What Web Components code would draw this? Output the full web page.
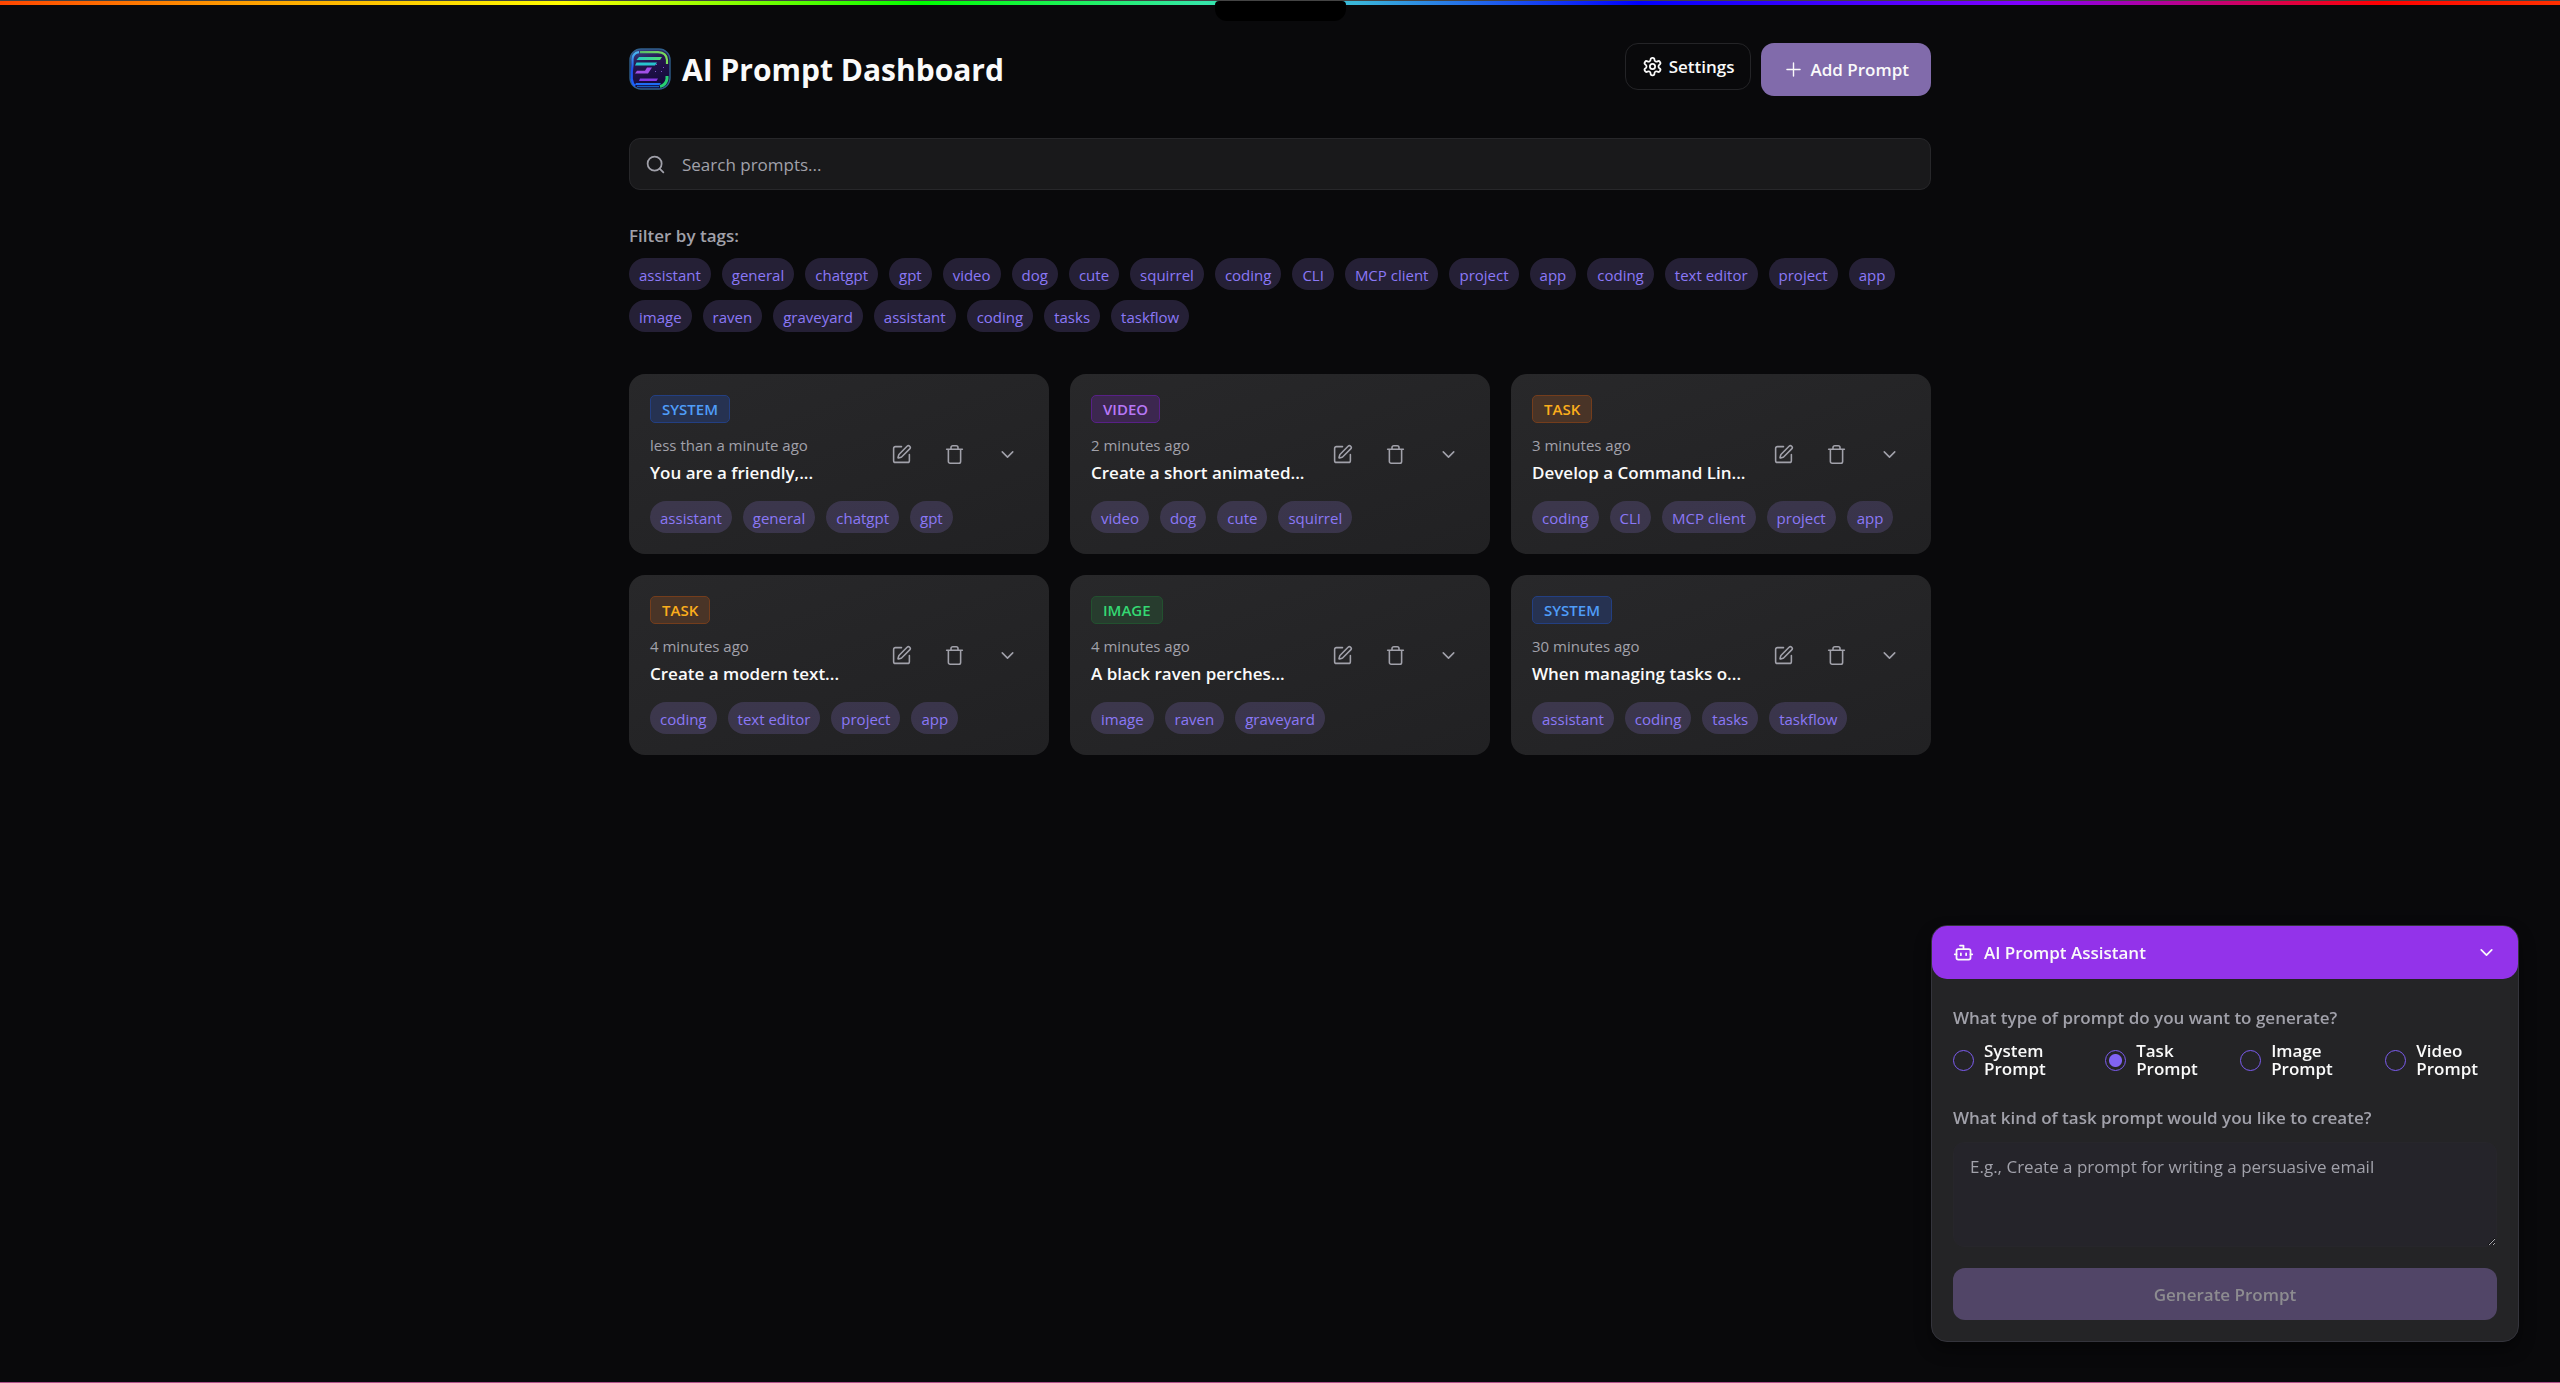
<!DOCTYPE html>
<html lang="en">
<head>
<meta charset="utf-8">
<title>AI Prompt Dashboard</title>
<style>
  html { height: 100%; }
  body {
    margin: 0;
    min-height: 100%;
    background: #09090b;
    color: #fafafa;
    font: 400 17px/26px "Open Sans", "Noto Sans", sans-serif;
  }
</style>
</head>
<body>
<prompt-dashboard></prompt-dashboard>
<script>
const ICONS = {
  settings: '<path d="M12.22 2h-.44a2 2 0 0 0-2 2v.18a2 2 0 0 1-1 1.73l-.43.25a2 2 0 0 1-2 0l-.15-.08a2 2 0 0 0-2.73.73l-.22.38a2 2 0 0 0 .73 2.73l.15.1a2 2 0 0 1 1 1.72v.51a2 2 0 0 1-1 1.74l-.15.09a2 2 0 0 0-.73 2.73l.22.38a2 2 0 0 0 2.73.73l.15-.08a2 2 0 0 1 2 0l.43.25a2 2 0 0 1 1 1.73V20a2 2 0 0 0 2 2h.44a2 2 0 0 0 2-2v-.18a2 2 0 0 1 1-1.73l.43-.25a2 2 0 0 1 2 0l.15.08a2 2 0 0 0 2.73-.73l.22-.39a2 2 0 0 0-.73-2.73l-.15-.08a2 2 0 0 1-1-1.74v-.5a2 2 0 0 1 1-1.74l.15-.09a2 2 0 0 0 .73-2.73l-.22-.38a2 2 0 0 0-2.73-.73l-.15.08a2 2 0 0 1-2 0l-.43-.25a2 2 0 0 1-1-1.73V4a2 2 0 0 0-2-2z"/><circle cx="12" cy="12" r="3"/>',
  plus: '<path d="M4.500 12h15M12 4.500v15"/>',
  search: '<circle cx="11" cy="11" r="8"/><path d="m21 21-4.3-4.3"/>',
  edit: '<path d="M12 3H5a2 2 0 0 0-2 2v14a2 2 0 0 0 2 2h14a2 2 0 0 0 2-2v-7"/><path d="M18.375 2.625a1 1 0 0 1 3 3l-9.013 9.014a2 2 0 0 1-.853.505l-2.873.84a.5.5 0 0 1-.62-.62l.84-2.873a2 2 0 0 1 .506-.852z"/>',
  trash: '<path d="M3 6h18M19 6v14a2 2 0 0 1-2 2H7a2 2 0 0 1-2-2V6M8 6V4a2 2 0 0 1 2-2h4a2 2 0 0 1 2 2v2"/>',
  chevron: '<path d="m6 9 6 6 6-6"/>',
  bot: '<path d="M12 8V4H8"/><rect width="16" height="12" x="4" y="8" rx="2"/><path d="M2 14h2M20 14h2M15 13v2M9 13v2"/>'
};

class UiIcon extends HTMLElement {
  constructor() {
    super();
    this.attachShadow({ mode: 'open' });
  }
  connectedCallback() {
    const weight = this.getAttribute('weight') || '2';
    this.shadowRoot.innerHTML = `
      <style>
        :host { display: inline-flex; flex: none; width: 21px; height: 21px; }
        svg { width: 100%; height: 100%; }
      </style>
      <svg viewBox="0 0 24 24" fill="none" stroke="currentColor" stroke-width="${weight}"
        stroke-linecap="round" stroke-linejoin="round" aria-hidden="true">${ICONS[this.getAttribute('name')]}</svg>`;
  }
}
customElements.define('ui-icon', UiIcon);

const define = (name, html, setup) => {
  const template = document.createElement('template');
  template.innerHTML = html;
  customElements.define(name, class extends HTMLElement {
    constructor() {
      super();
      this.attachShadow({ mode: 'open' }).append(template.content.cloneNode(true));
    }
    connectedCallback() { if (setup) setup.call(this, this.shadowRoot); }
  });
};

define('app-logo', `
  <style>
    :host { display: block; width: 42px; height: 42px; flex: none; }
    svg { display: block; width: 100%; height: 100%; }
  </style>
  <svg viewBox="0 0 42 42" aria-hidden="true">
    <defs>
      <linearGradient id="bg" x1="0" y1="0" x2=".3" y2="1"><stop offset="0" stop-color="#3b4a8f"/><stop offset=".4" stop-color="#26154f"/><stop offset="1" stop-color="#130a3a"/></linearGradient>
      <linearGradient id="left" x1="0" y1="0" x2="0" y2="1"><stop offset="0" stop-color="#49b8f0"/><stop offset=".5" stop-color="#1d4dea"/><stop offset="1" stop-color="#1c62ff"/></linearGradient>
      <linearGradient id="right" x1="0" y1="0" x2="1" y2="0"><stop offset="0" stop-color="#56b86a"/><stop offset="1" stop-color="#7be05a"/></linearGradient>
      <linearGradient id="teal" x1="0" y1="0" x2="1" y2="0"><stop offset="0" stop-color="#27c6c8"/><stop offset="1" stop-color="#4fdf6e"/></linearGradient>
    </defs>
    <rect x="1" y="1" width="40" height="40" rx="11" fill="url(#bg)" stroke="#2f5f8c" stroke-width="1.4"/>
    <g fill="none" stroke-width="2.2">
      <path d="M10 4.200Q4 5 3.500 11V17L2.800 24V31Q3.500 36 6 38" stroke="url(#left)"/>
      <path d="M11 4.200H29Q37.500 4.500 38 12V16" stroke="url(#right)"/>
      <path d="M38 28V31Q37 37 31 38.500" stroke="#27cf72" stroke-width="3"/>
      <path d="M8 38.500H30" stroke="#185fc0" stroke-width="1.4"/>
    </g>
    <path d="M10 9H33L31 12H7.500Z" fill="url(#teal)"/>
    <path d="M7.500 14.500H28L26 17.500H6Z" fill="#27c4cf"/>
    <path d="M18 19.500H23L19 25.500H6L8 22.800H16Z" fill="#a04fe6"/>
    <path d="M11 30.500H29L27.500 33H10Z" fill="#8438e4"/>
    <path d="M7 35H32L30.500 37H6Z" fill="#1f6cf5"/>
    <path d="M27 16h1v1h-1zM32 23h1v1h-1zM26 23h1v1h-1zM34 19h1v1h-1z" fill="#7a58c8"/>
  </svg>`);

define('prompt-tag', `
  <style>
    :host { display: inline-flex; }
    button {
      border: 0; border-radius: 16px; padding: 2px 10px 0; height: 32px;
      background: rgba(167, 139, 250, .18); color: #8b78f6;
      font: inherit; font-size: 15px; line-height: 30px; white-space: nowrap;
    }
  </style>
  <button type="button"><slot></slot></button>`);

define('prompt-card', `
  <style>
    :host {
      display: block; padding: 21px; border-radius: 16px;
      background: linear-gradient(160deg, #28282a, #212123);
    }
    .top { display: flex; align-items: flex-end; gap: 10px; }
    .text { flex: 1; min-width: 0; }
    .badge {
      display: inline-block; box-sizing: border-box; height: 28px; padding: 0 11px;
      border: 1px solid var(--line); border-radius: 5px;
      background: var(--fill); color: var(--ink);
      font-size: 15px; font-weight: 600; line-height: 27px; vertical-align: top;
    }
    .when { margin-top: 9px; color: #a1a1aa; font-size: 15px; line-height: 26px; }
    h3 { margin: 0; font-size: 17px; font-weight: 600; line-height: 30px; white-space: nowrap; }
    .actions { display: flex; gap: 11px; padding-bottom: 13px; }
    .actions button {
      display: grid; place-items: center; width: 42px; height: 42px; padding: 0;
      border: 0; background: none; color: #a1a1aa;
    }
    .tags { display: flex; flex-wrap: wrap; gap: 11px; margin-top: 13px; }
  </style>
  <div class="top">
    <div class="text">
      <span class="badge"></span>
      <div class="when"></div>
      <h3><slot></slot></h3>
    </div>
    <div class="actions">
      <button type="button" aria-label="Edit"><ui-icon name="edit" weight="1.8"></ui-icon></button>
      <button type="button" aria-label="Delete"><ui-icon name="trash" weight="1.8"></ui-icon></button>
      <button type="button" aria-label="Expand"><ui-icon name="chevron" weight="1.8"></ui-icon></button>
    </div>
  </div>
  <div class="tags"></div>`, function (root) {
  const colors = {
    SYSTEM: ['#263251', '#233f82', '#4f9df8'],
    VIDEO: ['#3c274f', '#582087', '#b777f7'],
    TASK: ['#493427', '#743d1c', '#fbad1c'],
    IMAGE: ['#273c2e', '#22512f', '#34d872']
  };
  const kind = this.getAttribute('kind');
  const badge = root.querySelector('.badge');
  badge.textContent = kind;
  ['--fill', '--line', '--ink'].forEach((key, i) => badge.style.setProperty(key, colors[kind][i]));
  root.querySelector('.when').textContent = this.getAttribute('when');
  root.querySelector('.tags').innerHTML = this.getAttribute('tags').split(',').map(t => `<prompt-tag>${t}</prompt-tag>`).join('');
});

define('prompt-assistant', `
  <style>
    :host {
      display: block; position: fixed; right: 41px; bottom: 41px; box-sizing: border-box; width: 588px;
      border: 1px solid #34343c; border-radius: 16px; background: #242426;
      box-shadow: 0 8px 16px rgba(0, 0, 0, .4);
      font-weight: 600;
    }
    header {
      display: flex; align-items: center; gap: 10px; height: 53px; padding: 0 21px;
      border-radius: 15px; background: #9333ea;
    }
    h2 { flex: 1; margin: 0; font-size: 17px; font-weight: 600; }
    header button { display: grid; padding: 0; border: 0; background: none; color: inherit; }
    form { padding: 22px 21px 21px; }
    fieldset { margin: 0; padding: 0; border: 0; min-width: 0; }
    legend, .ask { display: block; padding: 0; color: #a1a1aa; line-height: 34px; }
    .options { display: flex; gap: 30px; margin-top: 7px; }
    .options label { display: flex; align-items: center; gap: 10px; line-height: 18px; }
    input {
      appearance: none; flex: none; box-sizing: border-box; width: 21px; height: 21px; margin: 0;
      border: 1px solid #7c5cf0; border-radius: 50%;
    }
    input:checked { background: radial-gradient(circle, #8163f3 0 6px, transparent 7px); }
    .ask { margin-top: 23px; }
    textarea {
      display: block; box-sizing: border-box; width: 100%; height: 105px; margin-top: 7px; padding: 11px 16px;
      border: 1px solid #27262b; border-radius: 11px; background: #25242a; color: #fafafa;
      font: inherit; font-weight: 400; resize: vertical;
    }
    textarea::placeholder { color: #a1a1aa; }
    .go {
      display: block; width: 100%; height: 52px; margin-top: 21px; padding: 1px 0 0; border: 0; border-radius: 12px;
      background: #514567; color: #8d8c90; font: inherit;
    }
  </style>
  <header>
    <ui-icon name="bot"></ui-icon>
    <h2>AI Prompt Assistant</h2>
    <button type="button" aria-label="Collapse"><ui-icon name="chevron"></ui-icon></button>
  </header>
  <form>
    <fieldset>
      <legend>What type of prompt do you want to generate?</legend>
      <div class="options">
        <label><input type="radio" name="kind"><span>System Prompt</span></label>
        <label><input type="radio" name="kind" checked><span>Task Prompt</span></label>
        <label><input type="radio" name="kind"><span>Image Prompt</span></label>
        <label><input type="radio" name="kind"><span>Video Prompt</span></label>
      </div>
    </fieldset>
    <label class="ask" for="idea">What kind of task prompt would you like to create?</label>
    <textarea id="idea" placeholder="E.g., Create a prompt for writing a persuasive email"></textarea>
    <button class="go" type="button" disabled>Generate Prompt</button>
  </form>`);

define('prompt-dashboard', `
  <style>
    :host {
      display: block; box-sizing: border-box; min-height: 100vh; position: relative;
      border-top: 1px solid #444; border-bottom: 1px solid #b0508a;
    }
    .rainbow {
      height: 4px;
      background: linear-gradient(90deg, #ff4500, #ff9a00 9%, #ffff00 22%, #00ff00 36%, #35e6a8 47%, #3ab5da 53%, #0000ff 64%, #8000ff 79%, #ff0000 93%, #ff3000);
    }
    .notch {
      position: absolute; top: 0; left: 50%; width: 131px; height: 20px; margin-left: -65px;
      border-radius: 4px 4px 12px 12px; background: #000;
    }
    main { width: calc(100% - 64px); max-width: 1302px; margin: 0 auto; padding-top: 38px; }
    header { display: flex; align-items: flex-start; gap: 10px; height: 53px; }
    .brand { display: flex; align-items: center; gap: 11px; flex: 1; padding-top: 5px; }
    h1 { margin: 0; padding-top: 2px; font-size: 30px; font-weight: 700; line-height: 40px; white-space: nowrap; }
    header button {
      display: flex; align-items: center; gap: 6px; border-radius: 13px; color: #fafafa;
      font: inherit; font-weight: 600; white-space: nowrap;
    }
    .settings { height: 47px; padding: 0 16px; border: 1px solid #242427; background: none; }
    .add { height: 53px; padding: 0 22px; border: 0; background: #816bab; }
    .search {
      display: flex; align-items: center; gap: 16px; box-sizing: border-box; height: 52px; margin-top: 42px; padding: 0 15px;
      border: 1px solid #27272a; border-radius: 11px; background: #19191b; color: #a1a1aa;
    }
    .search input { flex: 1; border: 0; padding: 2px 0 0; background: none; color: #fafafa; font: inherit; outline: 0; }
    .search input::placeholder { color: #a1a1aa; }
    h2 { margin: 33px 0 9px; color: #a1a1aa; font-size: 17px; font-weight: 600; line-height: 26px; }
    .filters { display: flex; flex-wrap: wrap; gap: 10px 11px; }
    .grid { display: grid; grid-template-columns: repeat(3, 1fr); gap: 21px; margin-top: 42px; }
  </style>
  <div class="rainbow"></div>
  <div class="notch"></div>
  <main>
    <header>
      <div class="brand"><app-logo></app-logo><h1>AI Prompt Dashboard</h1></div>
      <button type="button" class="settings"><ui-icon name="settings"></ui-icon>Settings</button>
      <button type="button" class="add"><ui-icon name="plus" weight="1.6"></ui-icon>Add Prompt</button>
    </header>
    <label class="search"><ui-icon name="search"></ui-icon><input type="text" aria-label="Search prompts" placeholder="Search prompts..."></label>
    <h2>Filter by tags:</h2>
    <div class="filters">
      <prompt-tag>assistant</prompt-tag><prompt-tag>general</prompt-tag><prompt-tag>chatgpt</prompt-tag><prompt-tag>gpt</prompt-tag><prompt-tag>video</prompt-tag><prompt-tag>dog</prompt-tag><prompt-tag>cute</prompt-tag><prompt-tag>squirrel</prompt-tag><prompt-tag>coding</prompt-tag><prompt-tag>CLI</prompt-tag><prompt-tag>MCP client</prompt-tag><prompt-tag>project</prompt-tag><prompt-tag>app</prompt-tag><prompt-tag>coding</prompt-tag><prompt-tag>text editor</prompt-tag><prompt-tag>project</prompt-tag><prompt-tag>app</prompt-tag><prompt-tag>image</prompt-tag><prompt-tag>raven</prompt-tag><prompt-tag>graveyard</prompt-tag><prompt-tag>assistant</prompt-tag><prompt-tag>coding</prompt-tag><prompt-tag>tasks</prompt-tag><prompt-tag>taskflow</prompt-tag>
    </div>
    <div class="grid">
      <prompt-card kind="SYSTEM" when="less than a minute ago" tags="assistant,general,chatgpt,gpt">You are a friendly,...</prompt-card>
      <prompt-card kind="VIDEO" when="2 minutes ago" tags="video,dog,cute,squirrel">Create a short animated...</prompt-card>
      <prompt-card kind="TASK" when="3 minutes ago" tags="coding,CLI,MCP client,project,app">Develop a Command Lin...</prompt-card>
      <prompt-card kind="TASK" when="4 minutes ago" tags="coding,text editor,project,app">Create a modern text...</prompt-card>
      <prompt-card kind="IMAGE" when="4 minutes ago" tags="image,raven,graveyard">A black raven perches...</prompt-card>
      <prompt-card kind="SYSTEM" when="30 minutes ago" tags="assistant,coding,tasks,taskflow">When managing tasks o...</prompt-card>
    </div>
  </main>
  <prompt-assistant></prompt-assistant>`);
</script>
</body>
</html>
